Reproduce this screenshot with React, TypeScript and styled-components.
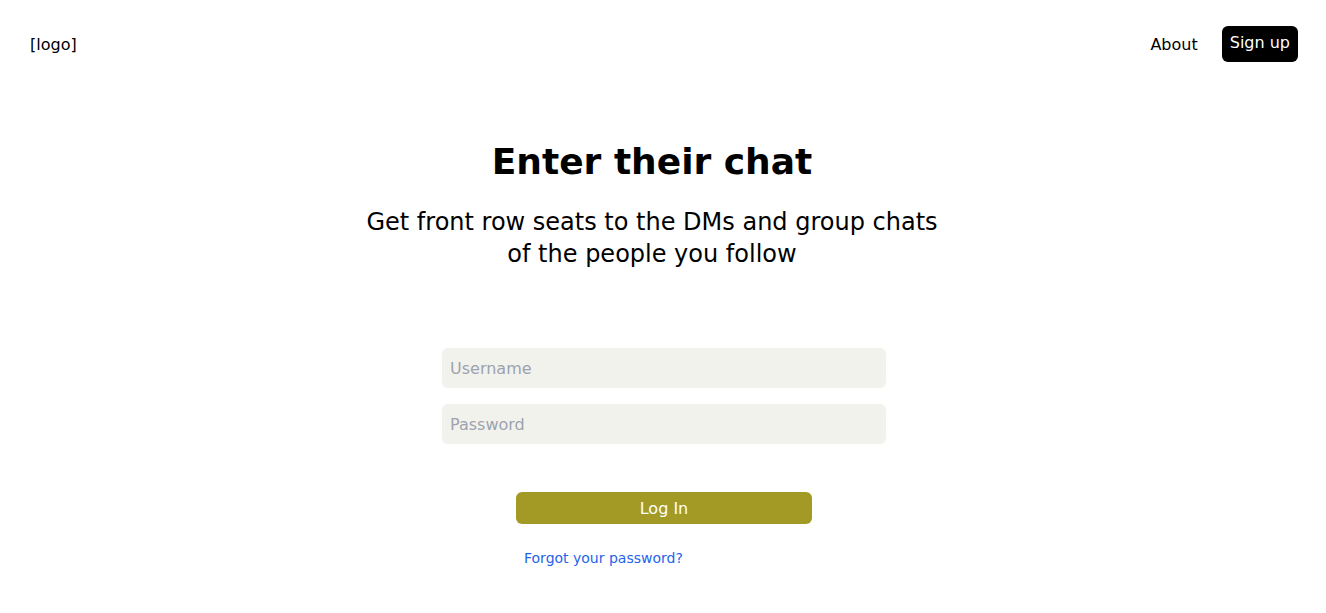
import React from "react";
import styled, { createGlobalStyle } from "styled-components";

const Global = createGlobalStyle`
  html, body { margin: 0; padding: 0; background: #ffffff; }
  body { font-family: "DejaVu Sans", Verdana, sans-serif; color: #000; }
  * { box-sizing: border-box; }
`;

const Header = styled.header`
  display: flex;
  align-items: center;
  justify-content: space-between;
  height: 88px;
  padding: 0 28px 0 30px;
`;

const Logo = styled.div`
  font-size: 16px;
`;

const Nav = styled.nav`
  display: flex;
  align-items: center;
  gap: 24px;
`;

const NavLink = styled.a`
  font-size: 16px;
  color: #000;
  text-decoration: none;
`;

const SignUp = styled.button`
  font-family: inherit;
  font-size: 16px;
  color: #fff;
  background: #000;
  border: none;
  border-radius: 6px;
  height: 36px;
  padding: 0 8px 3px;
  line-height: 19px;
`;

const Main = styled.main`
  display: flex;
  flex-direction: column;
  align-items: center;
`;

const Hero = styled.section`
  display: flex;
  flex-direction: column;
  align-items: center;
  padding-right: 22px;
  margin-top: 52px;
`;

const Title = styled.h1`
  margin: 0;
  font-size: 36px;
  line-height: 43px;
  font-weight: 700;
`;

const Subtitle = styled.p`
  margin: 23px 0 0;
  max-width: 585px;
  font-size: 24px;
  line-height: 32px;
  text-align: center;
`;

const Form = styled.form`
  display: flex;
  flex-direction: column;
  align-items: center;
  margin-top: 78px;
  margin-left: 2px;
  width: 444px;
`;

const Input = styled.input`
  width: 444px;
  height: 40px;
  border: none;
  outline: none;
  border-radius: 6px;
  background: #f2f2ec;
  padding: 0 8px;
  font-family: inherit;
  font-size: 16px;
  color: #000;
  margin-bottom: 16px;
  &::placeholder { color: #9ca3af; }
`;

const LoginButton = styled.button`
  margin-top: 32px;
  width: 296px;
  height: 32px;
  border: none;
  border-radius: 6px;
  background: #a29a25;
  color: #fff;
  font-family: inherit;
  font-size: 16px;
`;

const LinkRow = styled.div`
  width: 296px;
  margin-top: 24px;
  padding-left: 8px;
`;

const Forgot = styled.a`
  font-size: 14px;
  line-height: 17px;
  color: #2563eb;
  text-decoration: none;
`;

export default function App() {
  return (
    <>
      <Global />
      <Header>
        <Logo>[logo]</Logo>
        <Nav>
          <NavLink href="#">About</NavLink>
          <SignUp>Sign up</SignUp>
        </Nav>
      </Header>
      <Main>
        <Hero>
          <Title>Enter their chat</Title>
          <Subtitle>Get front row seats to the DMs and group chats of the people you follow</Subtitle>
        </Hero>
        <Form onSubmit={(e) => e.preventDefault()}>
          <Input placeholder="Username" />
          <Input placeholder="Password" type="password" />
          <LoginButton type="submit">Log In</LoginButton>
          <LinkRow>
            <Forgot href="#">Forgot your password?</Forgot>
          </LinkRow>
        </Form>
      </Main>
    </>
  );
}
